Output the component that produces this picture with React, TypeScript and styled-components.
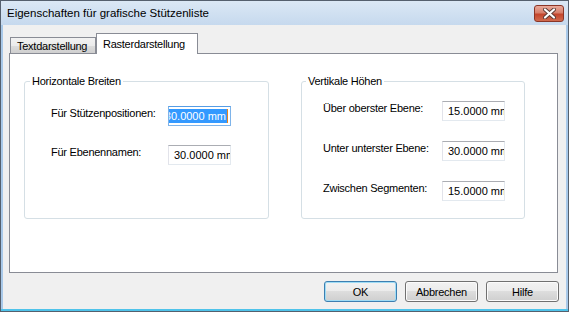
import React from 'react';
import styled, { createGlobalStyle } from 'styled-components';

const GlobalStyle = createGlobalStyle`
  html, body {
    margin: 0;
    padding: 0;
    background: #ffffff;
  }
  body {
    font-family: "Liberation Sans", Arial, sans-serif;
    font-size: 11px;
    letter-spacing: -0.25px;
    color: #000;
  }
  * {
    box-sizing: border-box;
  }
`

const Window = styled.div`
  width: 569px;
  height: 312px;
  border: 1px solid #55606e;
  display: flex;
  flex-direction: column;
  background: linear-gradient(
    to bottom,
    #dbe8f5 0px,
    #c6d9ee 24px,
    #a9c9e9 24px,
    #a9c9e9 calc(100% - 2px),
    #4fc3ea calc(100% - 2px)
  );
`

const TitleBar = styled.div`
  height: 24px;
  display: flex;
  align-items: center;
  padding: 0 4px 0 6px;
`

const Title = styled.span`
  font-family: "Liberation Sans", Arial, sans-serif;
  font-size: 11.5px;
  letter-spacing: 0;
  color: #000;
`

const CloseButton = styled.div`
  margin-left: auto;
  width: 30px;
  height: 17px;
  border: 1px solid #8a3526;
  border-radius: 3px;
  background: linear-gradient(to bottom, #e9a99a 0%, #d7806c 45%, #c4452c 55%, #d06a4e 100%);
  display: flex;
  align-items: center;
  justify-content: center;
`

const Body = styled.div`
  flex: 1;
  margin: 0 2px 2px 2px;
  background: #f0f0f0;
  padding: 8px 8px 7px 6px;
  display: flex;
  flex-direction: column;
`

const TabRow = styled.div`
  height: 20px;
  display: flex;
  align-items: flex-end;
  padding-left: 1px;
`

const Tab = styled.div<{ active?: boolean }>`
  position: relative;
  display: flex;
  align-items: center;
  border: 1px solid #898c95;
  border-bottom: none;
  padding-left: ${({ active }) => (active ? '6px' : '6px')};
  padding-bottom: ${({ active }) => (active ? '1px' : '0')};
  width: ${({ active }) => (active ? '102px' : '86px')};
  height: ${({ active }) => (active ? '21px' : '16px')};
  margin-bottom: ${({ active }) => (active ? '-1px' : '0')};
  z-index: ${({ active }) => (active ? 1 : 0)};
  background: ${({ active }) =>
    active ? '#ffffff' : 'linear-gradient(to bottom, #f2f2f2 0%, #ebebeb 50%, #dddddd 51%, #cfcfcf 100%)'};
`

const Panel = styled.div`
  height: 220px;
  border: 1px solid #898c95;
  background: #ffffff;
  display: flex;
  gap: 32px;
  padding: 27px 0 0 14px;
  align-items: flex-start;
`

const Group = styled.div<{ w: number; padTop: number; padLeft: number }>`
  position: relative;
  width: ${({ w }) => w}px;
  height: 138px;
  border: 1px solid #d5dfe5;
  border-radius: 3px;
  padding: ${({ padTop, padLeft }) => `${padTop}px 0 0 ${padLeft}px`};
`

const Legend = styled.span<{ left: number }>`
  position: absolute;
  top: -7px;
  left: ${({ left }) => left}px;
  padding: 0 2px;
  background: #ffffff;
  line-height: 13px;
`

const Fields = styled.div<{ labelWidth: number; rowGap: number }>`
  display: grid;
  grid-template-columns: ${({ labelWidth }) => labelWidth}px 63px;
  row-gap: ${({ rowGap }) => rowGap}px;
  align-items: start;
`

const Label = styled.span`
  line-height: 13px;
  padding-top: 1px;
  white-space: nowrap;
`

const TextBox = styled.div<{ focused?: boolean }>`
  width: 63px;
  height: 20px;
  border: 1px solid;
  border-color: ${({ focused }) =>
    focused ? '#569de5 #7eb4ea #7eb4ea #7eb4ea' : '#abadb3 #e3e9ef #e3e9ef #e2e3ea'};
  background: #ffffff;
  display: flex;
  align-items: center;
  justify-content: ${({ focused }) => (focused ? 'flex-end' : 'flex-start')};
  padding: ${({ focused }) => (focused ? '0 2px 0 0' : '0 0 0 4px')};
  overflow: hidden;
  white-space: nowrap;
  letter-spacing: 0;
`

const Value = styled.span<{ selected?: boolean }>`
  flex-shrink: 0;
  line-height: 14px;
  padding: 0 1px;
  color: ${({ selected }) => (selected ? '#ffffff' : '#000000')};
  background: ${({ selected }) => (selected ? '#3399ff' : 'transparent')};
  border-right: ${({ selected }) => (selected ? '1px solid #e8841a' : 'none')};
`

const Footer = styled.div`
  display: flex;
  justify-content: flex-end;
  gap: 8px;
  margin-top: 8px;
  margin-right: -1px;
`

const Button = styled.div<{ primary?: boolean }>`
  width: 73px;
  height: 21px;
  border: 1px solid ${({ primary }) => (primary ? '#3c7fb1' : '#707070')};
  border-radius: 3px;
  box-shadow: ${({ primary }) => (primary ? 'inset 0 0 0 1px #9fdcf5' : 'inset 0 0 0 1px #fbfbfb')};
  background: linear-gradient(to bottom, #f2f2f2 0%, #ebebeb 50%, #dddddd 50%, #cfcfcf 100%);
  display: flex;
  align-items: center;
  justify-content: center;
`

type Field = { label: string; value: string; focused?: boolean }

const left: Field[] = [
  { label: 'Für Stützenpositionen:', value: '30.0000 mm', focused: true },
  { label: 'Für Ebenennamen:', value: '30.0000 mm' },
]

const right: Field[] = [
  { label: 'Über oberster Ebene:', value: '15.0000 mm' },
  { label: 'Unter unterster Ebene:', value: '30.0000 mm' },
  { label: 'Zwischen Segmenten:', value: '15.0000 mm' },
]

function FieldList({ fields, labelWidth, rowGap }: { fields: Field[]; labelWidth: number; rowGap: number }) {
  return (
    <Fields labelWidth={labelWidth} rowGap={rowGap}>
      {fields.map(f => (
        <React.Fragment key={f.label}>
          <Label>{f.label}</Label>
          <TextBox focused={f.focused}>
            <Value selected={f.focused}>{f.value}</Value>
          </TextBox>
        </React.Fragment>
      ))}
    </Fields>
  )
}

function App(): JSX.Element {
  return (
    <>
      <GlobalStyle />
      <Window>
        <TitleBar>
          <Title>Eigenschaften für grafische Stützenliste</Title>
          <CloseButton>
            <svg width="13" height="11" viewBox="0 0 13 11">
              <path d="M2 1.5 L11 9.5 M11 1.5 L2 9.5" stroke="#5a3a34" strokeWidth="4" strokeLinecap="round" />
              <path d="M2 1.5 L11 9.5 M11 1.5 L2 9.5" stroke="#ffffff" strokeWidth="2.2" strokeLinecap="round" />
            </svg>
          </CloseButton>
        </TitleBar>
        <Body>
          <TabRow>
            <Tab>Textdarstellung</Tab>
            <Tab active>Rasterdarstellung</Tab>
          </TabRow>
          <Panel>
            <Group w={245} padTop={24} padLeft={26}>
              <Legend left={5}>Horizontale Breiten</Legend>
              <FieldList fields={left} labelWidth={117} rowGap={19} />
            </Group>
            <Group w={224} padTop={19} padLeft={21}>
              <Legend left={4}>Vertikale Höhen</Legend>
              <FieldList fields={right} labelWidth={119} rowGap={20} />
            </Group>
          </Panel>
          <Footer>
            <Button primary>OK</Button>
            <Button>Abbrechen</Button>
            <Button>Hilfe</Button>
          </Footer>
        </Body>
      </Window>
    </>
  );
}

export default App;
